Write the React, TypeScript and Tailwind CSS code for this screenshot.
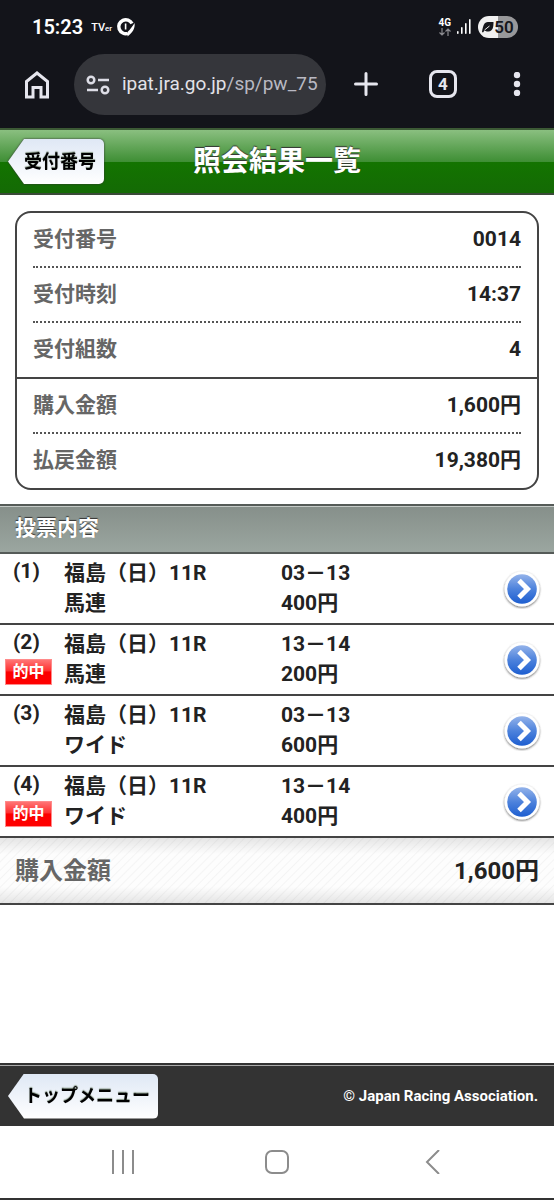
import React from "react";

type Bet = {
  no: number;
  race: string;
  kind: string;
  numbers: string;
  amount: string;
  hit: boolean;
};

const bets: Bet[] = [
  { no: 1, race: "福島（日）11R", kind: "馬連", numbers: "03－13", amount: "400円", hit: false },
  { no: 2, race: "福島（日）11R", kind: "馬連", numbers: "13－14", amount: "200円", hit: true },
  { no: 3, race: "福島（日）11R", kind: "ワイド", numbers: "03－13", amount: "600円", hit: false },
  { no: 4, race: "福島（日）11R", kind: "ワイド", numbers: "13－14", amount: "400円", hit: true },
];

const receipt = [
  { label: "受付番号", value: "0014" },
  { label: "受付時刻", value: "14:37" },
  { label: "受付組数", value: "4" },
];

const totals = [
  { label: "購入金額", value: "1,600円" },
  { label: "払戻金額", value: "19,380円" },
];

const StatusBar = () => (
  <div className="flex h-[54px] items-center justify-between pl-8 pr-9 text-white">
    <div className="flex items-center">
      <span className="text-xl font-semibold">15:23</span>
      <span className="ml-2 flex items-baseline text-[11px] font-medium leading-none">
        TV<span className="text-[8px]">er</span>
      </span>
      <svg className="ml-1 size-5" viewBox="0 0 20 20" fill="none">
        <path d="M12 16.300A7 7 0 1 1 16 6.500" stroke="white" strokeWidth="3.500" />
        <path d="M18.600 6C19.200 12 16.500 15.500 11.500 19.500l.5-5c2-1.800 4-4.500 6.600-8.500z" fill="white" />
        <path d="M9.600 6.500v6" stroke="white" strokeWidth="1.600" />
      </svg>
    </div>
    <div className="flex items-center">
      <div className="flex flex-col items-center">
        <span className="text-[10px] font-bold leading-[10px]">4G</span>
        <svg className="h-2 w-3" viewBox="0 0 12 8" fill="none" stroke="#8b8b90" strokeWidth="1.200">
          <path d="M3 0v7M.5 4.500 3 7l2.500-2.500M9 8V1M6.500 3.500 9 1l2.500 2.500" />
        </svg>
      </div>
      <svg className="ml-1.5 h-4 w-[15px]" viewBox="0 0 15 16" fill="white">
        <rect x="0" y="12" width="1.600" height="3" rx=".8" />
        <rect x="4" y="8" width="1.600" height="7" rx=".8" />
        <rect x="8" y="4" width="1.600" height="11" rx=".8" />
        <rect x="12" y="0" width="1.600" height="15" rx=".8" />
      </svg>
      <div className="ml-1.5 flex h-[22px] w-10 items-center justify-center rounded-full bg-[linear-gradient(90deg,#f1f1f1_50%,#98989a_50%)] text-[#15161b]">
        <svg className="h-3 w-3" viewBox="0 0 12 12">
          <path d="M0 11C1 5 2 1 6 1h5.500C11.500 6 11 10 6.500 10.500 4.500 10.700 3 9.800 2.500 9.500L1 11.500z" fill="#15161b" />
          <path d="M2.500 9 7.500 5" stroke="#f1f1f1" strokeWidth="1" />
        </svg>
        <span className="text-[17px] font-semibold leading-none">50</span>
      </div>
    </div>
  </div>
);

const BrowserBar = () => (
  <div className="flex h-[74px] items-start">
    <button aria-label="ホーム" className="ml-6 mt-4 shrink-0">
      <svg className="h-[29px] w-[26px]" viewBox="0 0 26 29" fill="none" stroke="#e6e6ee" strokeWidth="3">
        <path d="M2.500 11.500 13 3l10.500 8.500V27H17v-9.500H9V27H2.500z" />
      </svg>
    </button>
    <button className="ml-6 flex h-[61px] min-w-0 flex-1 items-center rounded-full bg-[#35363b] pl-3 pr-1">
      <svg className="size-6 shrink-0" viewBox="0 0 24 24" fill="none" stroke="#dddde6" strokeWidth="2.500">
        <circle cx="5" cy="7" r="3.300" />
        <path d="M12 7h11M1 17h11" />
        <circle cx="19" cy="17" r="3.300" />
      </svg>
      <span className="ml-3 min-w-0 flex-1 overflow-hidden whitespace-nowrap text-left text-[19px] text-[#e2e2e9]">
        ipat.jra.go.jp<span className="text-[#b9b9c3]">/sp/pw_75</span>
      </span>
    </button>
    <button aria-label="新しいタブ" className="ml-7 mt-[18px] shrink-0">
      <svg className="size-6" viewBox="0 0 24 24" stroke="#e6e6ee" strokeWidth="3" strokeLinecap="round">
        <path d="M12 1.500v21M1.500 12h21" />
      </svg>
    </button>
    <button
      aria-label="タブ一覧"
      className="ml-[51px] mt-4 flex size-7 shrink-0 items-center justify-center rounded-lg border-3 border-[#e6e6ee] text-[17px] font-bold leading-none text-[#e6e6ee]"
    >
      4
    </button>
    <button aria-label="メニュー" className="ml-14 mr-[33px] mt-[18px] shrink-0">
      <svg className="h-6 w-2" viewBox="0 0 8 24" fill="#e6e6ee">
        <circle cx="4" cy="3" r="3.200" />
        <circle cx="4" cy="12" r="3.200" />
        <circle cx="4" cy="21" r="3.200" />
      </svg>
    </button>
  </div>
);

// Left-pointing tag button used in the page header and footer
const BackLink = ({ children }: { children: React.ReactNode }) => (
  <a href="#" className="ml-2 justify-self-start drop-shadow-[0_0_1px_#333]">
    <span className="flex h-[45px] items-center rounded-r-[5px] bg-linear-to-b from-[#dfe8f5] to-white pl-4 pr-2 text-lg font-bold text-black [clip-path:polygon(0_50%,16px_0,100%_0,100%_100%,16px_100%)] [text-shadow:0_-1px_1px_#8a9a8a]">
      {children}
    </span>
  </a>
);

const ReceiptRow = ({ label, value, dotted }: { label: string; value: string; dotted: boolean }) => (
  <div
    className={
      dotted
        ? "mx-4 flex h-[55px] items-center justify-between border-b-2 border-dotted border-[#555]"
        : "mx-4 flex h-[54px] items-center justify-between"
    }
  >
    <dt className="text-[#666]">{label}</dt>
    <dd>{value}</dd>
  </div>
);

const ArrowIcon = () => (
  <svg className="size-10" viewBox="0 0 40 40">
    <defs>
      <linearGradient id="arrowFill" x1="0" y1="0" x2="0" y2="1">
        <stop offset="0" stopColor="#94b3ea" />
        <stop offset=".5" stopColor="#4d82dc" />
        <stop offset="1" stopColor="#1d5ed0" />
      </linearGradient>
      <filter id="arrowShadow" x="-20%" y="-20%" width="140%" height="140%">
        <feDropShadow dx="0" dy="1" stdDeviation="1" floodColor="#333" floodOpacity=".75" />
      </filter>
    </defs>
    <circle cx="20" cy="20" r="17.500" fill="white" filter="url(#arrowShadow)" />
    <circle cx="20" cy="20" r="14.800" fill="url(#arrowFill)" />
    <path d="m17 11.500 8.500 8.500-8.500 8.500" fill="none" stroke="white" strokeWidth="5" />
  </svg>
);

const BetRow = ({ bet }: { bet: Bet }) => (
  <li className="border-b-2 border-[#444]">
    <a href="#" className="flex h-[69px] items-start pr-3">
      <div className="flex w-16 shrink-0 flex-col pt-0.5">
        <span className="ml-[13px] leading-[30px]">({bet.no})</span>
        {bet.hit && (
          <span className="ml-[5px] mt-0.5 flex h-[26px] w-[47px] items-center justify-center border border-[#ff8a8a] bg-[linear-gradient(#ff7474,#ff3030_45%,#fb0000_50%,#f00)] text-base leading-none text-white">
            的中
          </span>
        )}
      </div>
      <div className="w-[217px] shrink-0 pt-1 leading-[30px]">
        <p>{bet.race}</p>
        <p>{bet.kind}</p>
      </div>
      <div className="flex-1 pt-1 leading-[30px]">
        <p>{bet.numbers}</p>
        <p>{bet.amount}</p>
      </div>
      <div className="self-center">
        <ArrowIcon />
      </div>
    </a>
  </li>
);

const NavBar = () => (
  <nav className="grid h-[74px] grid-cols-3 items-center justify-items-center border-b-2 border-[#333] bg-white px-11">
    <button aria-label="履歴">
      <svg className="size-6" viewBox="0 0 24 24" stroke="#8c8c8c" strokeWidth="2">
        <path d="M3 0v24M13 0v24M23 0v24" />
      </svg>
    </button>
    <button aria-label="ホーム画面">
      <svg className="size-6" viewBox="0 0 24 24" fill="none" stroke="#8c8c8c" strokeWidth="2">
        <rect x="1" y="1" width="22" height="22" rx="6" />
      </svg>
    </button>
    <button aria-label="戻る">
      <svg className="size-6" viewBox="0 0 24 24" fill="none" stroke="#8c8c8c" strokeWidth="2">
        <path d="M19 0 7 12l12 12" />
      </svg>
    </button>
  </nav>
);

export default function App() {
  return (
    <div className="flex min-h-screen flex-col bg-white font-['Roboto','Noto_Sans_CJK_JP',sans-serif] text-[#222]">
      <div className="bg-[#13141a]">
        <StatusBar />
        <BrowserBar />
      </div>

      <header className="grid h-[67px] grid-cols-[1fr_auto_1fr] items-center border-y-2 border-t-[#3c5a35] border-b-[#3a4a38] bg-[linear-gradient(#8abf80,#3f8f35_50%,#137400_50%,#146a05)]">
        <BackLink>受付番号</BackLink>
        <h1 className="text-[28px] font-bold leading-none text-white [text-shadow:0_-1px_1px_#333]">
          照会結果一覧
        </h1>
      </header>

      <main className="flex-1 text-[21px] font-bold">
        <dl className="mx-[15px] mt-4 rounded-2xl border-2 border-[#444]">
          <div className="border-b-2 border-[#444]">
            {receipt.map((row, i) => (
              <ReceiptRow key={row.label} {...row} dotted={i < receipt.length - 1} />
            ))}
          </div>
          {totals.map((row, i) => (
            <ReceiptRow key={row.label} {...row} dotted={i < totals.length - 1} />
          ))}
        </dl>

        <h2 className="mt-3.5 flex h-[50px] items-center border-y-2 border-[#555b58] bg-linear-to-b from-[#868f8a] to-[#9ba6a0] pl-[15px] text-white shadow-[inset_0_1px_0_#c5cbc8] [text-shadow:0_-1px_1px_#333]">
          投票内容
        </h2>

        <ul>
          {bets.map((bet) => (
            <BetRow key={bet.no} bet={bet} />
          ))}
        </ul>

        <div className="flex h-[67px] items-center justify-between border-b-2 border-[#444] bg-[linear-gradient(#00000018,transparent_25%,transparent_75%,#00000018),repeating-linear-gradient(135deg,#fdfdfd_0px,#fdfdfd_4px,#f4f4f4_5px,#fdfdfd_6px)] px-[15px] text-2xl">
          <span className="text-[#666]">購入金額</span>
          <span>1,600円</span>
        </div>
      </main>

      <footer className="border-t-2 border-[#333]">
        <div className="flex h-[61px] items-center justify-between border-t border-[#aaa] bg-[#333] pr-4">
          <BackLink>トップメニュー</BackLink>
          <small className="text-[15px] font-bold text-white">© Japan Racing Association.</small>
        </div>
      </footer>
      <NavBar />
    </div>
  );
}
